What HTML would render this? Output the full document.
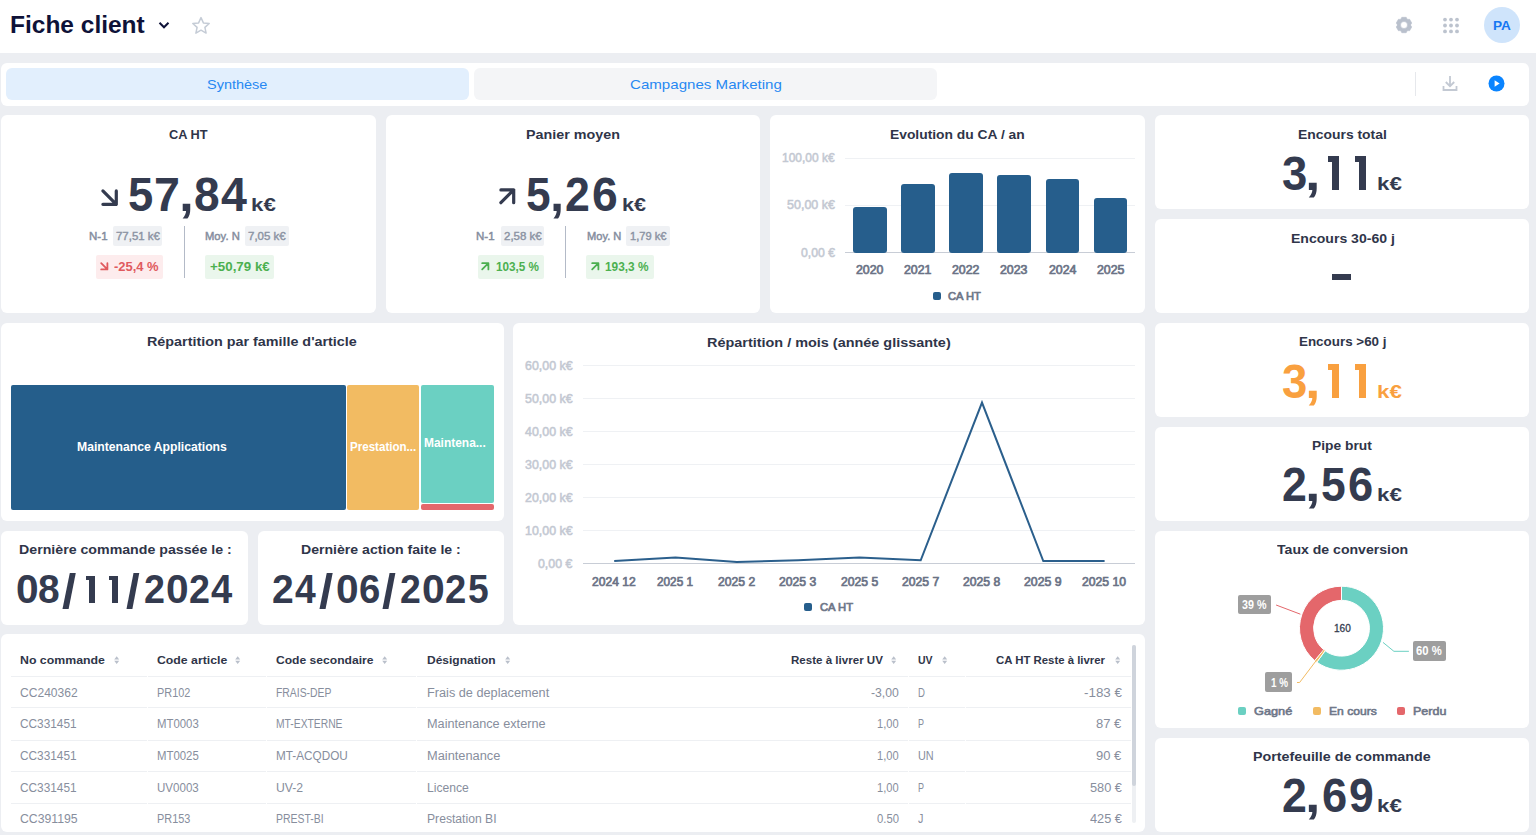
<!DOCTYPE html>
<html><head><meta charset="utf-8">
<style>
*{box-sizing:border-box;margin:0;padding:0}
html,body{width:1536px;height:835px;overflow:hidden}
body{background:#eceef2;font-family:"Liberation Sans",sans-serif;color:#343b4f;position:relative}
.t{position:absolute;white-space:nowrap;transform-origin:0 0}
.card{position:absolute;background:#fff;border-radius:6px}
svg{position:absolute;overflow:visible}
</style></head><body>
<div class="t" style="left:0px;top:0px;width:1536px;height:53px;background:#fff;border-radius:0px;"></div>
<div class="t" style="left:10.45px;top:11.80px;font-size:23.4px;line-height:26px;color:#0e1238;font-weight:bold;transform:scaleX(1.0470);">Fiche client</div>
<svg style="left:158px;top:21px" width="12" height="9" viewBox="0 0 12 9"><path d="M1.5 1.8 L6 6.3 L10.5 1.8" fill="none" stroke="#0e1238" stroke-width="2"/></svg>
<svg style="left:191px;top:16px" width="20" height="19" viewBox="0 0 20 19"><path d="M10 1.6 L12.4 6.9 L18.2 7.5 L13.9 11.4 L15.1 17.1 L10 14.2 L4.9 17.1 L6.1 11.4 L1.8 7.5 L7.6 6.9 Z" fill="none" stroke="#c5ccd6" stroke-width="1.5" stroke-linejoin="round"/></svg>
<svg style="left:1393.6px;top:14.75px" width="20" height="20" viewBox="0 0 20 20"><path fill="#b9c0cc" fill-rule="evenodd" stroke="#b9c0cc" stroke-width="0.6" stroke-linejoin="round" d="M7.13 3.84 L7.79 2.31 L12.21 2.31 L12.87 3.84 L13.90 4.43 L15.56 4.25 L17.76 8.06 L16.77 9.41 L16.77 10.59 L17.76 11.94 L15.56 15.75 L13.90 15.57 L12.87 16.16 L12.21 17.69 L7.79 17.69 L7.13 16.16 L6.10 15.57 L4.44 15.75 L2.24 11.94 L3.23 10.59 L3.23 9.41 L2.24 8.06 L4.44 4.25 L6.10 4.43 Z M13.5 10 A3.5 3.5 0 1 0 6.5 10 A3.5 3.5 0 1 0 13.5 10 Z"/></svg>
<svg style="left:1442px;top:17px" width="18" height="17" viewBox="0 0 18 17"><g fill="#bcc3ce"><circle cx="3" cy="2.6" r="1.9"/><circle cx="9" cy="2.6" r="1.9"/><circle cx="15" cy="2.6" r="1.9"/><circle cx="3" cy="8.5" r="1.9"/><circle cx="9" cy="8.5" r="1.9"/><circle cx="15" cy="8.5" r="1.9"/><circle cx="3" cy="14.4" r="1.9"/><circle cx="9" cy="14.4" r="1.9"/><circle cx="15" cy="14.4" r="1.9"/></g></svg>
<div class="t" style="left:1484px;top:7px;width:36px;height:36px;background:#cfe4fb;border-radius:18px;"></div>
<div class="t" style="left:1493.00px;top:18.00px;font-size:13.5px;line-height:15px;color:#1677f2;font-weight:bold;transform:scaleX(1.0110);">PA</div>
<div class="card" style="left:1px;top:63.4px;width:1528px;height:42.2px"></div>
<div class="t" style="left:6px;top:68px;width:463px;height:32px;background:#e2effd;border-radius:6px;"></div>
<div class="t" style="left:474px;top:68px;width:463px;height:32px;background:#f4f5f7;border-radius:6px;"></div>
<div class="t" style="left:207.30px;top:76.90px;font-size:13.5px;line-height:15px;color:#2788f2;font-weight:normal;transform:scaleX(1.0721);">Synthèse</div>
<div class="t" style="left:629.70px;top:76.80px;font-size:13.5px;line-height:15px;color:#2788f2;font-weight:normal;transform:scaleX(1.1182);">Campagnes Marketing</div>
<div class="t" style="left:1415px;top:72px;width:1px;height:24px;background:#e6e8ec;border-radius:0px;"></div>
<svg style="left:1441px;top:74px" width="18" height="18" viewBox="0 0 18 18"><path d="M9 2 V12 M4.8 8 L9 12.2 L13.2 8 M2.5 12 V16 H15.5 V12" fill="none" stroke="#c3c9d3" stroke-width="1.8"/></svg>
<svg style="left:1488px;top:75px" width="17" height="17" viewBox="0 0 17 17"><circle cx="8.5" cy="8.5" r="8" fill="#0a84ff"/><path d="M6.6 5.3 L11.6 8.5 L6.6 11.7 Z" fill="#fff"/></svg>
<div class="card" style="left:1px;top:115px;width:375px;height:198px"></div>
<div class="card" style="left:386px;top:115px;width:374px;height:198px"></div>
<div class="card" style="left:770px;top:115px;width:375px;height:198px"></div>
<div class="card" style="left:1155px;top:115px;width:374px;height:94px"></div>
<div class="card" style="left:1155px;top:219px;width:374px;height:94px"></div>
<div class="card" style="left:1px;top:323px;width:503px;height:198px"></div>
<div class="card" style="left:513px;top:323px;width:632px;height:302px"></div>
<div class="card" style="left:1155px;top:323px;width:374px;height:94px"></div>
<div class="card" style="left:1155px;top:427px;width:374px;height:94px"></div>
<div class="card" style="left:1px;top:531px;width:247px;height:94px"></div>
<div class="card" style="left:258px;top:531px;width:246px;height:94px"></div>
<div class="card" style="left:1155px;top:531px;width:374px;height:197px"></div>
<div class="card" style="left:1px;top:634px;width:1144px;height:198px"></div>
<div class="card" style="left:1155px;top:738px;width:374px;height:94px"></div>
<div class="t" style="left:169.00px;top:126.60px;font-size:13.7px;line-height:15px;color:#2f3549;font-weight:bold;transform:scaleX(0.9327);">CA HT</div>
<svg style="left:101px;top:188.6px" width="17.2" height="17.2" viewBox="0 0 17.2 17.2"><path d="M1.9000000000000001 1.9000000000000001 L15.299999999999999 15.299999999999999 M15.299999999999999 1.9000000000000001 V15.299999999999999 H1.9000000000000001" fill="none" stroke="#343b4f" stroke-width="3.2" stroke-linecap="round" stroke-linejoin="round"/></svg>
<div class="t" style="left:127.95px;top:167.80px;font-size:47.9px;line-height:53px;color:#343b4f;font-weight:bold;transform:scaleX(0.9480);">5</div>
<div class="t" style="left:154.45px;top:167.80px;font-size:47.9px;line-height:53px;color:#343b4f;font-weight:bold;transform:scaleX(0.9739);">7</div>
<div class="t" style="left:178.86px;top:167.80px;font-size:47.9px;line-height:53px;color:#343b4f;font-weight:bold;transform:scaleX(1.1125);">,</div>
<div class="t" style="left:193.54px;top:167.80px;font-size:47.9px;line-height:53px;color:#343b4f;font-weight:bold;transform:scaleX(0.9640);">8</div>
<div class="t" style="left:220.70px;top:167.80px;font-size:47.9px;line-height:53px;color:#343b4f;font-weight:bold;transform:scaleX(0.9741);">4</div>
<div class="t" style="left:250.80px;top:193.80px;font-size:18.5px;line-height:21px;color:#343b4f;font-weight:bold;transform:scaleX(1.2028);">k€</div>
<div class="t" style="left:88.60px;top:229.50px;font-size:11px;line-height:12px;color:#858d9e;font-weight:normal;-webkit-text-stroke:0.45px #858d9e;transform:scaleX(1.0450);">N-1</div>
<div class="t" style="left:113.2px;top:226px;width:49.2px;height:19.5px;background:#eff1f4;border-radius:2px;"></div>
<div class="t" style="left:116.30px;top:229.50px;font-size:11px;line-height:12px;color:#8b93a3;font-weight:normal;-webkit-text-stroke:0.4px #8b93a3;transform:scaleX(1.0384);">77,51 k€</div>
<div class="t" style="left:184px;top:226px;width:1.3px;height:51.5px;background:#b3bac7;border-radius:0px;"></div>
<div class="t" style="left:205.00px;top:229.50px;font-size:11px;line-height:12px;color:#858d9e;font-weight:normal;-webkit-text-stroke:0.45px #858d9e;transform:scaleX(1.0212);">Moy. N</div>
<div class="t" style="left:244.5px;top:226px;width:44.1px;height:19.5px;background:#eff1f4;border-radius:2px;"></div>
<div class="t" style="left:248.40px;top:229.50px;font-size:11px;line-height:12px;color:#8b93a3;font-weight:normal;-webkit-text-stroke:0.4px #8b93a3;transform:scaleX(1.0427);">7,05 k€</div>
<div class="t" style="left:95.6px;top:255.2px;width:67.2px;height:23.4px;background:#fdeced;border-radius:2px;"></div>
<svg style="left:99.9px;top:262.4px" width="8.6" height="8.6" viewBox="0 0 8.6 8.6"><path d="M1.2 1.2 L7.3999999999999995 7.3999999999999995 M7.3999999999999995 1.2 V7.3999999999999995 H1.2" fill="none" stroke="#e05a5e" stroke-width="1.8" stroke-linecap="round" stroke-linejoin="round"/></svg>
<div class="t" style="left:113.60px;top:259.80px;font-size:12.5px;line-height:14px;color:#e05a5e;font-weight:bold;transform:scaleX(1.0357);">-25,4 %</div>
<div class="t" style="left:205px;top:255.2px;width:69.1px;height:23.4px;background:#eaf6ec;border-radius:2px;"></div>
<div class="t" style="left:210.00px;top:259.80px;font-size:12.5px;line-height:14px;color:#4cb050;font-weight:bold;transform:scaleX(1.0678);">+50,79 k€</div>
<div class="t" style="left:526.10px;top:126.60px;font-size:13.7px;line-height:15px;color:#2f3549;font-weight:bold;transform:scaleX(1.0458);">Panier moyen</div>
<svg style="left:499.2px;top:188.3px" width="16.6" height="16.6" viewBox="0 0 16.6 16.6"><path d="M1.9000000000000001 14.700000000000001 L14.700000000000001 1.9000000000000001 M1.9000000000000001 1.9000000000000001 H14.700000000000001 V14.700000000000001" fill="none" stroke="#343b4f" stroke-width="3.2" stroke-linecap="round" stroke-linejoin="round"/></svg>
<div class="t" style="left:525.87px;top:168.00px;font-size:47.7px;line-height:53px;color:#343b4f;font-weight:bold;transform:scaleX(0.9280);">5</div>
<div class="t" style="left:549.81px;top:168.00px;font-size:47.7px;line-height:53px;color:#343b4f;font-weight:bold;transform:scaleX(1.0625);">,</div>
<div class="t" style="left:565.16px;top:168.00px;font-size:47.7px;line-height:53px;color:#343b4f;font-weight:bold;transform:scaleX(0.9375);">2</div>
<div class="t" style="left:591.83px;top:168.00px;font-size:47.7px;line-height:53px;color:#343b4f;font-weight:bold;transform:scaleX(0.9708);">6</div>
<div class="t" style="left:621.63px;top:194.00px;font-size:18.5px;line-height:21px;color:#343b4f;font-weight:bold;transform:scaleX(1.1665);">k€</div>
<div class="t" style="left:476.30px;top:229.50px;font-size:11px;line-height:12px;color:#858d9e;font-weight:normal;-webkit-text-stroke:0.45px #858d9e;transform:scaleX(1.0450);">N-1</div>
<div class="t" style="left:500.9px;top:226px;width:43px;height:19.5px;background:#eff1f4;border-radius:2px;"></div>
<div class="t" style="left:503.70px;top:229.50px;font-size:11px;line-height:12px;color:#8b93a3;font-weight:normal;-webkit-text-stroke:0.4px #8b93a3;transform:scaleX(1.0427);">2,58 k€</div>
<div class="t" style="left:565px;top:226px;width:1.3px;height:51.5px;background:#b3bac7;border-radius:0px;"></div>
<div class="t" style="left:586.60px;top:229.50px;font-size:11px;line-height:12px;color:#858d9e;font-weight:normal;-webkit-text-stroke:0.45px #858d9e;transform:scaleX(1.0095);">Moy. N</div>
<div class="t" style="left:626.4px;top:226px;width:43.4px;height:19.5px;background:#eff1f4;border-radius:2px;"></div>
<div class="t" style="left:630.30px;top:229.50px;font-size:11px;line-height:12px;color:#8b93a3;font-weight:normal;-webkit-text-stroke:0.4px #8b93a3;transform:scaleX(1.0093);">1,79 k€</div>
<div class="t" style="left:477.5px;top:255.2px;width:66.4px;height:23.4px;background:#eaf6ec;border-radius:2px;"></div>
<svg style="left:481px;top:262px" width="8.6" height="8.6" viewBox="0 0 8.6 8.6"><path d="M1.2 7.3999999999999995 L7.3999999999999995 1.2 M1.2 1.2 H7.3999999999999995 V7.3999999999999995" fill="none" stroke="#4cb050" stroke-width="1.8" stroke-linecap="round" stroke-linejoin="round"/></svg>
<div class="t" style="left:496.30px;top:259.80px;font-size:12.5px;line-height:14px;color:#4cb050;font-weight:bold;transform:scaleX(0.9376);">103,5 %</div>
<div class="t" style="left:586.2px;top:255.2px;width:67.5px;height:23.4px;background:#eaf6ec;border-radius:2px;"></div>
<svg style="left:590.5px;top:262px" width="8.6" height="8.6" viewBox="0 0 8.6 8.6"><path d="M1.2 7.3999999999999995 L7.3999999999999995 1.2 M1.2 1.2 H7.3999999999999995 V7.3999999999999995" fill="none" stroke="#4cb050" stroke-width="1.8" stroke-linecap="round" stroke-linejoin="round"/></svg>
<div class="t" style="left:605.30px;top:259.80px;font-size:12.5px;line-height:14px;color:#4cb050;font-weight:bold;transform:scaleX(0.9486);">193,3 %</div>
<div class="t" style="left:889.90px;top:126.70px;font-size:13.7px;line-height:15px;color:#2f3549;font-weight:bold;transform:scaleX(1.0107);">Evolution du CA / an</div>
<div class="t" style="left:782.20px;top:151.40px;font-size:12px;line-height:14px;color:#c3c8d2;font-weight:normal;-webkit-text-stroke:0.5px #c3c8d2;transform:scaleX(0.9974);">100,00 k€</div>
<div class="t" style="left:786.80px;top:198.40px;font-size:12px;line-height:14px;color:#c3c8d2;font-weight:normal;-webkit-text-stroke:0.5px #c3c8d2;transform:scaleX(1.0418);">50,00 k€</div>
<div class="t" style="left:800.80px;top:246.40px;font-size:12px;line-height:14px;color:#c3c8d2;font-weight:normal;-webkit-text-stroke:0.5px #c3c8d2;transform:scaleX(1.0181);">0,00 €</div>
<div class="t" style="left:845px;top:157.5px;width:290px;height:1px;background:#eff1f4;border-radius:0px;"></div>
<div class="t" style="left:845px;top:205px;width:290px;height:1px;background:#eff1f4;border-radius:0px;"></div>
<div class="t" style="left:845px;top:252px;width:290px;height:1.2px;background:#c8cdd6;border-radius:0px;"></div>
<div class="t" style="left:853px;top:206.8px;width:33.7px;height:46.0px;background:#265e8c;border-radius:3px;"></div>
<div class="t" style="left:856.25px;top:263.40px;font-size:12px;line-height:14px;color:#6b7386;font-weight:normal;-webkit-text-stroke:0.7px #6b7386;transform:scaleX(1.0288);">2020</div>
<div class="t" style="left:901px;top:184px;width:33.7px;height:68.80000000000001px;background:#265e8c;border-radius:3px;"></div>
<div class="t" style="left:904.25px;top:263.40px;font-size:12px;line-height:14px;color:#6b7386;font-weight:normal;-webkit-text-stroke:0.7px #6b7386;transform:scaleX(1.0288);">2021</div>
<div class="t" style="left:949px;top:172.7px;width:33.7px;height:80.10000000000002px;background:#265e8c;border-radius:3px;"></div>
<div class="t" style="left:952.25px;top:263.40px;font-size:12px;line-height:14px;color:#6b7386;font-weight:normal;-webkit-text-stroke:0.7px #6b7386;transform:scaleX(1.0288);">2022</div>
<div class="t" style="left:997.2px;top:175.3px;width:33.7px;height:77.5px;background:#265e8c;border-radius:3px;"></div>
<div class="t" style="left:1000.45px;top:263.40px;font-size:12px;line-height:14px;color:#6b7386;font-weight:normal;-webkit-text-stroke:0.7px #6b7386;transform:scaleX(1.0288);">2023</div>
<div class="t" style="left:1045.5px;top:179.1px;width:33.7px;height:73.70000000000002px;background:#265e8c;border-radius:3px;"></div>
<div class="t" style="left:1048.75px;top:263.40px;font-size:12px;line-height:14px;color:#6b7386;font-weight:normal;-webkit-text-stroke:0.7px #6b7386;transform:scaleX(1.0288);">2024</div>
<div class="t" style="left:1093.7px;top:198.1px;width:33.7px;height:54.70000000000002px;background:#265e8c;border-radius:3px;"></div>
<div class="t" style="left:1096.95px;top:263.40px;font-size:12px;line-height:14px;color:#6b7386;font-weight:normal;-webkit-text-stroke:0.7px #6b7386;transform:scaleX(1.0288);">2025</div>
<div class="t" style="left:932.8px;top:291.7px;width:8px;height:8px;background:#265e8c;border-radius:2px;"></div>
<div class="t" style="left:948.40px;top:289.80px;font-size:11.3px;line-height:12px;color:#6e7688;font-weight:normal;-webkit-text-stroke:0.7px #6e7688;transform:scaleX(0.9885);">CA HT</div>
<div class="t" style="left:1297.80px;top:126.60px;font-size:13.7px;line-height:15px;color:#2f3549;font-weight:bold;transform:scaleX(1.0155);">Encours total</div>
<div class="t" style="left:1282.35px;top:146.80px;font-size:47.7px;line-height:53px;color:#343b4f;font-weight:bold;transform:scaleX(0.9542);">3</div>
<div class="t" style="left:1305.31px;top:146.80px;font-size:47.7px;line-height:53px;color:#343b4f;font-weight:bold;transform:scaleX(1.1625);">,</div>
<div class="t" style="left:1332.1px;top:156.4px;width:6.900000000000091px;height:33.400000000000006px;background:#343b4f;border-radius:0px;"></div>
<div class="t" style="left:1327.7px;top:156.4px;width:4.899999999999864px;height:5.699999999999989px;background:#343b4f;border-radius:0px;"></div>
<div class="t" style="left:1358.9px;top:156.4px;width:7.099999999999909px;height:33.400000000000006px;background:#343b4f;border-radius:0px;"></div>
<div class="t" style="left:1355px;top:156.4px;width:4.400000000000091px;height:5.699999999999989px;background:#343b4f;border-radius:0px;"></div>
<div class="t" style="left:1377.49px;top:172.80px;font-size:18.5px;line-height:21px;color:#343b4f;font-weight:bold;transform:scaleX(1.2080);">k€</div>
<div class="t" style="left:1290.50px;top:230.60px;font-size:13.7px;line-height:15px;color:#2f3549;font-weight:bold;transform:scaleX(1.0261);">Encours 30-60 j</div>
<div class="t" style="left:1332px;top:274.3px;width:19px;height:5.6px;background:#343b4f;border-radius:0px;"></div>
<div class="t" style="left:1298.90px;top:334.40px;font-size:13.7px;line-height:15px;color:#2f3549;font-weight:bold;transform:scaleX(0.9787);">Encours >60 j</div>
<div class="t" style="left:1282.35px;top:354.80px;font-size:47.7px;line-height:53px;color:#f9a03f;font-weight:bold;transform:scaleX(0.9542);">3</div>
<div class="t" style="left:1305.31px;top:354.80px;font-size:47.7px;line-height:53px;color:#f9a03f;font-weight:bold;transform:scaleX(1.1625);">,</div>
<div class="t" style="left:1332.1px;top:364.4px;width:6.900000000000091px;height:33.400000000000034px;background:#f9a03f;border-radius:0px;"></div>
<div class="t" style="left:1327.7px;top:364.4px;width:4.899999999999864px;height:5.7000000000000455px;background:#f9a03f;border-radius:0px;"></div>
<div class="t" style="left:1358.9px;top:364.4px;width:7.099999999999909px;height:33.400000000000034px;background:#f9a03f;border-radius:0px;"></div>
<div class="t" style="left:1355px;top:364.4px;width:4.400000000000091px;height:5.7000000000000455px;background:#f9a03f;border-radius:0px;"></div>
<div class="t" style="left:1377.49px;top:380.80px;font-size:18.5px;line-height:21px;color:#f9a03f;font-weight:bold;transform:scaleX(1.2080);">k€</div>
<div class="t" style="left:1311.70px;top:438.20px;font-size:13.7px;line-height:15px;color:#2f3549;font-weight:bold;transform:scaleX(1.0091);">Pipe brut</div>
<div class="t" style="left:1282.36px;top:457.90px;font-size:47.7px;line-height:53px;color:#343b4f;font-weight:bold;transform:scaleX(0.9375);">2</div>
<div class="t" style="left:1305.31px;top:457.90px;font-size:47.7px;line-height:53px;color:#343b4f;font-weight:bold;transform:scaleX(1.1625);">,</div>
<div class="t" style="left:1321.07px;top:457.90px;font-size:47.7px;line-height:53px;color:#343b4f;font-weight:bold;transform:scaleX(0.9320);">5</div>
<div class="t" style="left:1348.35px;top:457.90px;font-size:47.7px;line-height:53px;color:#343b4f;font-weight:bold;transform:scaleX(0.9500);">6</div>
<div class="t" style="left:1377.49px;top:483.90px;font-size:18.5px;line-height:21px;color:#343b4f;font-weight:bold;transform:scaleX(1.2080);">k€</div>
<div class="t" style="left:1252.90px;top:749.20px;font-size:13.7px;line-height:15px;color:#2f3549;font-weight:bold;transform:scaleX(1.0429);">Portefeuille de commande</div>
<div class="t" style="left:1282.36px;top:768.70px;font-size:47.7px;line-height:53px;color:#343b4f;font-weight:bold;transform:scaleX(0.9375);">2</div>
<div class="t" style="left:1305.31px;top:768.70px;font-size:47.7px;line-height:53px;color:#343b4f;font-weight:bold;transform:scaleX(1.1625);">,</div>
<div class="t" style="left:1321.55px;top:768.70px;font-size:47.7px;line-height:53px;color:#343b4f;font-weight:bold;transform:scaleX(0.9500);">6</div>
<div class="t" style="left:1348.77px;top:768.70px;font-size:47.7px;line-height:53px;color:#343b4f;font-weight:bold;transform:scaleX(0.9333);">9</div>
<div class="t" style="left:1377.49px;top:794.70px;font-size:18.5px;line-height:21px;color:#343b4f;font-weight:bold;transform:scaleX(1.2080);">k€</div>
<div class="t" style="left:147.20px;top:334.00px;font-size:13.7px;line-height:15px;color:#2f3549;font-weight:bold;transform:scaleX(1.0476);">Répartition par famille d'article</div>
<div class="t" style="left:11px;top:384.7px;width:334.6px;height:125.8px;background:#255e8b;border-radius:2px;"></div>
<div class="t" style="left:347.3px;top:384.7px;width:71.9px;height:125.8px;background:#f2bb62;border-radius:2px;"></div>
<div class="t" style="left:421px;top:384.7px;width:72.7px;height:117.9px;background:#6bd0c2;border-radius:2px;"></div>
<div class="t" style="left:421px;top:504.3px;width:72.7px;height:6.2px;background:#e4676b;border-radius:2px;"></div>
<div class="t" style="left:76.60px;top:440.00px;font-size:12px;line-height:14px;color:#ffffff;font-weight:bold;transform:scaleX(1.0152);">Maintenance Applications</div>
<div class="t" style="left:349.90px;top:439.80px;font-size:12px;line-height:14px;color:#ffffff;font-weight:bold;transform:scaleX(0.9642);">Prestation...</div>
<div class="t" style="left:423.90px;top:436.00px;font-size:12px;line-height:14px;color:#ffffff;font-weight:bold;transform:scaleX(0.9955);">Maintena...</div>
<div class="t" style="left:18.70px;top:541.70px;font-size:13.7px;line-height:15px;color:#2f3549;font-weight:bold;transform:scaleX(1.0359);">Dernière commande passée le :</div>
<div class="t" style="left:15.68px;top:566.90px;font-size:40.1px;line-height:45px;color:#343b4f;font-weight:bold;transform:scaleX(1.0150);">0</div>
<div class="t" style="left:38.33px;top:566.90px;font-size:40.1px;line-height:45px;color:#343b4f;font-weight:bold;transform:scaleX(0.9714);">8</div>
<div class="t" style="left:62.40px;top:563.64px;font-size:40.1px;line-height:45px;color:#343b4f;font-weight:bold;transform:scale(1.2818,1.2097);">/</div>
<div class="t" style="left:89px;top:575.5px;width:6.200000000000003px;height:27.399999999999977px;background:#343b4f;border-radius:0px;"></div>
<div class="t" style="left:85.8px;top:575.5px;width:3.700000000000003px;height:4.2999999999999545px;background:#343b4f;border-radius:0px;"></div>
<div class="t" style="left:111.6px;top:575.5px;width:6.300000000000011px;height:27.399999999999977px;background:#343b4f;border-radius:0px;"></div>
<div class="t" style="left:108.5px;top:575.5px;width:3.5999999999999943px;height:4.2999999999999545px;background:#343b4f;border-radius:0px;"></div>
<div class="t" style="left:126.30px;top:563.64px;font-size:40.1px;line-height:45px;color:#343b4f;font-weight:bold;transform:scale(1.2364,1.2097);">/</div>
<div class="t" style="left:143.66px;top:566.90px;font-size:40.1px;line-height:45px;color:#343b4f;font-weight:bold;transform:scaleX(0.9400);">2</div>
<div class="t" style="left:165.89px;top:566.90px;font-size:40.1px;line-height:45px;color:#343b4f;font-weight:bold;transform:scaleX(1.0150);">0</div>
<div class="t" style="left:188.96px;top:566.90px;font-size:40.1px;line-height:45px;color:#343b4f;font-weight:bold;transform:scaleX(0.9400);">2</div>
<div class="t" style="left:211.00px;top:566.90px;font-size:40.1px;line-height:45px;color:#343b4f;font-weight:bold;transform:scaleX(0.9522);">4</div>
<div class="t" style="left:301.20px;top:541.70px;font-size:13.7px;line-height:15px;color:#2f3549;font-weight:bold;transform:scaleX(1.0296);">Dernière action faite le :</div>
<div class="t" style="left:272.12px;top:566.90px;font-size:40.1px;line-height:45px;color:#343b4f;font-weight:bold;transform:scaleX(0.9750);">2</div>
<div class="t" style="left:295.00px;top:566.90px;font-size:40.1px;line-height:45px;color:#343b4f;font-weight:bold;transform:scaleX(0.9304);">4</div>
<div class="t" style="left:318.80px;top:563.64px;font-size:40.1px;line-height:45px;color:#343b4f;font-weight:bold;transform:scale(1.2727,1.2097);">/</div>
<div class="t" style="left:335.79px;top:566.90px;font-size:40.1px;line-height:45px;color:#343b4f;font-weight:bold;transform:scaleX(1.0150);">0</div>
<div class="t" style="left:359.25px;top:566.90px;font-size:40.1px;line-height:45px;color:#343b4f;font-weight:bold;transform:scaleX(0.9550);">6</div>
<div class="t" style="left:382.40px;top:563.64px;font-size:40.1px;line-height:45px;color:#343b4f;font-weight:bold;transform:scale(1.2455,1.2097);">/</div>
<div class="t" style="left:400.26px;top:566.90px;font-size:40.1px;line-height:45px;color:#343b4f;font-weight:bold;transform:scaleX(0.9350);">2</div>
<div class="t" style="left:421.98px;top:566.90px;font-size:40.1px;line-height:45px;color:#343b4f;font-weight:bold;transform:scaleX(1.0200);">0</div>
<div class="t" style="left:445.15px;top:566.90px;font-size:40.1px;line-height:45px;color:#343b4f;font-weight:bold;transform:scaleX(0.9550);">2</div>
<div class="t" style="left:467.87px;top:566.90px;font-size:40.1px;line-height:45px;color:#343b4f;font-weight:bold;transform:scaleX(0.9286);">5</div>
<div class="t" style="left:707.10px;top:334.60px;font-size:13.7px;line-height:15px;color:#2f3549;font-weight:bold;transform:scaleX(1.0540);">Répartition / mois (année glissante)</div>
<div class="t" style="left:524.60px;top:359.00px;font-size:12px;line-height:14px;color:#c3c8d2;font-weight:normal;-webkit-text-stroke:0.5px #c3c8d2;transform:scaleX(1.0331);">60,00 k€</div>
<div class="t" style="left:583px;top:364.9px;width:552px;height:1px;background:#eff1f4;border-radius:0px;"></div>
<div class="t" style="left:524.60px;top:392.00px;font-size:12px;line-height:14px;color:#c3c8d2;font-weight:normal;-webkit-text-stroke:0.5px #c3c8d2;transform:scaleX(1.0331);">50,00 k€</div>
<div class="t" style="left:583px;top:397.9px;width:552px;height:1px;background:#eff1f4;border-radius:0px;"></div>
<div class="t" style="left:524.60px;top:425.00px;font-size:12px;line-height:14px;color:#c3c8d2;font-weight:normal;-webkit-text-stroke:0.5px #c3c8d2;transform:scaleX(1.0331);">40,00 k€</div>
<div class="t" style="left:583px;top:430.9px;width:552px;height:1px;background:#eff1f4;border-radius:0px;"></div>
<div class="t" style="left:524.60px;top:458.00px;font-size:12px;line-height:14px;color:#c3c8d2;font-weight:normal;-webkit-text-stroke:0.5px #c3c8d2;transform:scaleX(1.0331);">30,00 k€</div>
<div class="t" style="left:583px;top:463.9px;width:552px;height:1px;background:#eff1f4;border-radius:0px;"></div>
<div class="t" style="left:524.60px;top:491.00px;font-size:12px;line-height:14px;color:#c3c8d2;font-weight:normal;-webkit-text-stroke:0.5px #c3c8d2;transform:scaleX(1.0331);">20,00 k€</div>
<div class="t" style="left:583px;top:496.9px;width:552px;height:1px;background:#eff1f4;border-radius:0px;"></div>
<div class="t" style="left:524.60px;top:524.00px;font-size:12px;line-height:14px;color:#c3c8d2;font-weight:normal;-webkit-text-stroke:0.5px #c3c8d2;transform:scaleX(1.0331);">10,00 k€</div>
<div class="t" style="left:583px;top:529.9px;width:552px;height:1px;background:#eff1f4;border-radius:0px;"></div>
<div class="t" style="left:537.80px;top:557.00px;font-size:12px;line-height:14px;color:#c3c8d2;font-weight:normal;-webkit-text-stroke:0.5px #c3c8d2;transform:scaleX(1.0300);">0,00 €</div>
<div class="t" style="left:583px;top:562.9px;width:552px;height:1.2px;background:#c8cdd6;border-radius:0px;"></div>
<div class="t" style="left:592.20px;top:574.80px;font-size:12px;line-height:14px;color:#6b7386;font-weight:normal;-webkit-text-stroke:0.7px #6b7386;transform:scaleX(1.0068);">2024 12</div>
<div class="t" style="left:657.35px;top:574.80px;font-size:12px;line-height:14px;color:#6b7386;font-weight:normal;-webkit-text-stroke:0.7px #6b7386;transform:scaleX(0.9803);">2025 1</div>
<div class="t" style="left:718.05px;top:574.80px;font-size:12px;line-height:14px;color:#6b7386;font-weight:normal;-webkit-text-stroke:0.7px #6b7386;transform:scaleX(1.0127);">2025 2</div>
<div class="t" style="left:779.35px;top:574.80px;font-size:12px;line-height:14px;color:#6b7386;font-weight:normal;-webkit-text-stroke:0.7px #6b7386;transform:scaleX(1.0127);">2025 3</div>
<div class="t" style="left:840.65px;top:574.80px;font-size:12px;line-height:14px;color:#6b7386;font-weight:normal;-webkit-text-stroke:0.7px #6b7386;transform:scaleX(1.0127);">2025 5</div>
<div class="t" style="left:901.95px;top:574.80px;font-size:12px;line-height:14px;color:#6b7386;font-weight:normal;-webkit-text-stroke:0.7px #6b7386;transform:scaleX(1.0127);">2025 7</div>
<div class="t" style="left:963.25px;top:574.80px;font-size:12px;line-height:14px;color:#6b7386;font-weight:normal;-webkit-text-stroke:0.7px #6b7386;transform:scaleX(1.0127);">2025 8</div>
<div class="t" style="left:1024.35px;top:574.80px;font-size:12px;line-height:14px;color:#6b7386;font-weight:normal;-webkit-text-stroke:0.7px #6b7386;transform:scaleX(1.0235);">2025 9</div>
<div class="t" style="left:1082.40px;top:574.80px;font-size:12px;line-height:14px;color:#6b7386;font-weight:normal;-webkit-text-stroke:0.7px #6b7386;transform:scaleX(1.0159);">2025 10</div>
<svg style="left:0;top:0" width="1536" height="835"><polyline points="614.2,561.1 675.5,557.4 736.8,561.9 798.1,560.3 859.4,557.5 920.7,560.3 982.0,402.6 1043.3,561.0 1104.6,561.0" fill="none" stroke="#2b5f8c" stroke-width="2" stroke-linejoin="miter"/></svg>
<div class="t" style="left:803.5px;top:603px;width:8px;height:8px;background:#265e8c;border-radius:2px;"></div>
<div class="t" style="left:820.30px;top:601.00px;font-size:11.3px;line-height:12px;color:#6e7688;font-weight:normal;-webkit-text-stroke:0.7px #6e7688;transform:scaleX(0.9944);">CA HT</div>
<div class="t" style="left:1276.50px;top:541.90px;font-size:13.7px;line-height:15px;color:#2f3549;font-weight:bold;transform:scaleX(1.0285);">Taux de conversion</div>
<svg style="left:0;top:0" width="1536" height="835"><path d="M1341.50 586.20 A42 42 0 1 1 1316.81 662.18 L1325.10 650.77 A27.9 27.9 0 1 0 1341.50 600.30 Z" fill="#6bd0c2" stroke="#fff" stroke-width="1"/><path d="M1316.81 662.18 A42 42 0 0 1 1314.73 660.56 L1323.72 649.70 A27.9 27.9 0 0 0 1325.10 650.77 Z" fill="#f2bb62" stroke="#fff" stroke-width="1"/><path d="M1314.73 660.56 A42 42 0 0 1 1341.50 586.20 L1341.50 600.30 A27.9 27.9 0 0 0 1323.72 649.70 Z" fill="#e4676b" stroke="#fff" stroke-width="1"/><polyline points="1276.1,605 1300.4,614.2" fill="none" stroke="#e4676b" stroke-width="1"/><polyline points="1383,642.4 1393.9,651.3 1408.9,651.3" fill="none" stroke="#6bd0c2" stroke-width="1"/><polyline points="1297,682.5 1299.6,682.5 1324.3,649.9" fill="none" stroke="#f2bb62" stroke-width="1"/></svg>
<div class="t" style="left:1334.00px;top:621.90px;font-size:10.5px;line-height:12px;color:#343b4f;font-weight:normal;-webkit-text-stroke:0.3px #343b4f;transform:scaleX(0.9616);">160</div>
<div class="t" style="left:1238.2px;top:594.8px;width:32.7px;height:19.4px;background:#9e9e9e;border-radius:2px;"></div>
<div class="t" style="left:1242.00px;top:597.70px;font-size:12px;line-height:14px;color:#fff;font-weight:bold;transform:scaleX(0.8923);">39 %</div>
<div class="t" style="left:1412.5px;top:641px;width:33.1px;height:19.7px;background:#9e9e9e;border-radius:2px;"></div>
<div class="t" style="left:1416.20px;top:644.20px;font-size:12px;line-height:14px;color:#fff;font-weight:bold;transform:scaleX(0.9393);">60 %</div>
<div class="t" style="left:1265.2px;top:672.2px;width:26.4px;height:19.6px;background:#9e9e9e;border-radius:2px;"></div>
<div class="t" style="left:1270.50px;top:675.50px;font-size:12px;line-height:14px;color:#fff;font-weight:bold;transform:scaleX(0.8235);">1 %</div>
<div class="t" style="left:1238.2px;top:707.3px;width:8px;height:7.5px;background:#6bd0c2;border-radius:2px;"></div>
<div class="t" style="left:1254.30px;top:704.90px;font-size:11.5px;line-height:12px;color:#6e7688;font-weight:normal;-webkit-text-stroke:0.6px #6e7688;transform:scaleX(1.1075);">Gagné</div>
<div class="t" style="left:1312.8px;top:707.3px;width:8px;height:7.5px;background:#f2bb62;border-radius:2px;"></div>
<div class="t" style="left:1328.50px;top:704.90px;font-size:11.5px;line-height:12px;color:#6e7688;font-weight:normal;-webkit-text-stroke:0.6px #6e7688;transform:scaleX(1.0519);">En cours</div>
<div class="t" style="left:1397px;top:707.3px;width:8px;height:7.5px;background:#e4676b;border-radius:2px;"></div>
<div class="t" style="left:1412.70px;top:704.90px;font-size:11.5px;line-height:12px;color:#6e7688;font-weight:normal;-webkit-text-stroke:0.6px #6e7688;transform:scaleX(1.0861);">Perdu</div>
<div class="t" style="left:20.20px;top:654.20px;font-size:11px;line-height:12px;color:#2f3549;font-weight:bold;transform:scaleX(1.1206);">No commande</div>
<div class="t" style="left:156.90px;top:654.20px;font-size:11px;line-height:12px;color:#2f3549;font-weight:bold;transform:scaleX(1.1154);">Code article</div>
<div class="t" style="left:276.10px;top:654.20px;font-size:11px;line-height:12px;color:#2f3549;font-weight:bold;transform:scaleX(1.0992);">Code secondaire</div>
<div class="t" style="left:426.70px;top:654.20px;font-size:11px;line-height:12px;color:#2f3549;font-weight:bold;transform:scaleX(1.0897);">Désignation</div>
<div class="t" style="left:790.50px;top:654.20px;font-size:11px;line-height:12px;color:#2f3549;font-weight:bold;transform:scaleX(1.0511);">Reste à livrer UV</div>
<div class="t" style="left:918.30px;top:654.20px;font-size:11px;line-height:12px;color:#2f3549;font-weight:bold;transform:scaleX(0.9533);">UV</div>
<div class="t" style="left:995.60px;top:654.20px;font-size:11px;line-height:12px;color:#2f3549;font-weight:bold;transform:scaleX(1.0349);">CA HT Reste à livrer</div>
<svg style="left:114px;top:656.1px" width="5.4" height="8.2" viewBox="0 0 5.4 8.2"><path d="M0.2 3.5 L2.7 0.2 L5.2 3.5 Z M0.2 4.7 L2.7 8 L5.2 4.7 Z" fill="#bac0cb"/></svg>
<svg style="left:234.6px;top:656.1px" width="5.4" height="8.2" viewBox="0 0 5.4 8.2"><path d="M0.2 3.5 L2.7 0.2 L5.2 3.5 Z M0.2 4.7 L2.7 8 L5.2 4.7 Z" fill="#bac0cb"/></svg>
<svg style="left:382px;top:656.1px" width="5.4" height="8.2" viewBox="0 0 5.4 8.2"><path d="M0.2 3.5 L2.7 0.2 L5.2 3.5 Z M0.2 4.7 L2.7 8 L5.2 4.7 Z" fill="#bac0cb"/></svg>
<svg style="left:504.7px;top:656.1px" width="5.4" height="8.2" viewBox="0 0 5.4 8.2"><path d="M0.2 3.5 L2.7 0.2 L5.2 3.5 Z M0.2 4.7 L2.7 8 L5.2 4.7 Z" fill="#bac0cb"/></svg>
<svg style="left:891.1px;top:656.1px" width="5.4" height="8.2" viewBox="0 0 5.4 8.2"><path d="M0.2 3.5 L2.7 0.2 L5.2 3.5 Z M0.2 4.7 L2.7 8 L5.2 4.7 Z" fill="#bac0cb"/></svg>
<svg style="left:942.2px;top:656.1px" width="5.4" height="8.2" viewBox="0 0 5.4 8.2"><path d="M0.2 3.5 L2.7 0.2 L5.2 3.5 Z M0.2 4.7 L2.7 8 L5.2 4.7 Z" fill="#bac0cb"/></svg>
<svg style="left:1114.9px;top:656.1px" width="5.4" height="8.2" viewBox="0 0 5.4 8.2"><path d="M0.2 3.5 L2.7 0.2 L5.2 3.5 Z M0.2 4.7 L2.7 8 L5.2 4.7 Z" fill="#bac0cb"/></svg>
<div class="t" style="left:10.5px;top:676.4px;width:136.0px;height:1px;background:#eef0f3;border-radius:0px;"></div>
<div class="t" style="left:147.5px;top:676.4px;width:118.0px;height:1px;background:#eef0f3;border-radius:0px;"></div>
<div class="t" style="left:266.5px;top:676.4px;width:149.5px;height:1px;background:#eef0f3;border-radius:0px;"></div>
<div class="t" style="left:417px;top:676.4px;width:491px;height:1px;background:#eef0f3;border-radius:0px;"></div>
<div class="t" style="left:909px;top:676.4px;width:56px;height:1px;background:#eef0f3;border-radius:0px;"></div>
<div class="t" style="left:966px;top:676.4px;width:164.5px;height:1px;background:#eef0f3;border-radius:0px;"></div>
<div class="t" style="left:10.5px;top:707.4px;width:136.0px;height:1px;background:#eef0f3;border-radius:0px;"></div>
<div class="t" style="left:147.5px;top:707.4px;width:118.0px;height:1px;background:#eef0f3;border-radius:0px;"></div>
<div class="t" style="left:266.5px;top:707.4px;width:149.5px;height:1px;background:#eef0f3;border-radius:0px;"></div>
<div class="t" style="left:417px;top:707.4px;width:491px;height:1px;background:#eef0f3;border-radius:0px;"></div>
<div class="t" style="left:909px;top:707.4px;width:56px;height:1px;background:#eef0f3;border-radius:0px;"></div>
<div class="t" style="left:966px;top:707.4px;width:164.5px;height:1px;background:#eef0f3;border-radius:0px;"></div>
<div class="t" style="left:10.5px;top:739.7px;width:136.0px;height:1px;background:#eef0f3;border-radius:0px;"></div>
<div class="t" style="left:147.5px;top:739.7px;width:118.0px;height:1px;background:#eef0f3;border-radius:0px;"></div>
<div class="t" style="left:266.5px;top:739.7px;width:149.5px;height:1px;background:#eef0f3;border-radius:0px;"></div>
<div class="t" style="left:417px;top:739.7px;width:491px;height:1px;background:#eef0f3;border-radius:0px;"></div>
<div class="t" style="left:909px;top:739.7px;width:56px;height:1px;background:#eef0f3;border-radius:0px;"></div>
<div class="t" style="left:966px;top:739.7px;width:164.5px;height:1px;background:#eef0f3;border-radius:0px;"></div>
<div class="t" style="left:10.5px;top:771.1px;width:136.0px;height:1px;background:#eef0f3;border-radius:0px;"></div>
<div class="t" style="left:147.5px;top:771.1px;width:118.0px;height:1px;background:#eef0f3;border-radius:0px;"></div>
<div class="t" style="left:266.5px;top:771.1px;width:149.5px;height:1px;background:#eef0f3;border-radius:0px;"></div>
<div class="t" style="left:417px;top:771.1px;width:491px;height:1px;background:#eef0f3;border-radius:0px;"></div>
<div class="t" style="left:909px;top:771.1px;width:56px;height:1px;background:#eef0f3;border-radius:0px;"></div>
<div class="t" style="left:966px;top:771.1px;width:164.5px;height:1px;background:#eef0f3;border-radius:0px;"></div>
<div class="t" style="left:10.5px;top:803.1px;width:136.0px;height:1px;background:#eef0f3;border-radius:0px;"></div>
<div class="t" style="left:147.5px;top:803.1px;width:118.0px;height:1px;background:#eef0f3;border-radius:0px;"></div>
<div class="t" style="left:266.5px;top:803.1px;width:149.5px;height:1px;background:#eef0f3;border-radius:0px;"></div>
<div class="t" style="left:417px;top:803.1px;width:491px;height:1px;background:#eef0f3;border-radius:0px;"></div>
<div class="t" style="left:909px;top:803.1px;width:56px;height:1px;background:#eef0f3;border-radius:0px;"></div>
<div class="t" style="left:966px;top:803.1px;width:164.5px;height:1px;background:#eef0f3;border-radius:0px;"></div>
<div class="t" style="left:19.90px;top:685.60px;font-size:12px;line-height:14px;color:#878e9d;font-weight:normal;transform:scaleX(1.0052);">CC240362</div>
<div class="t" style="left:156.80px;top:685.60px;font-size:12px;line-height:14px;color:#878e9d;font-weight:normal;transform:scaleX(0.9077);">PR102</div>
<div class="t" style="left:276.10px;top:685.60px;font-size:12px;line-height:14px;color:#878e9d;font-weight:normal;transform:scaleX(0.8656);">FRAIS-DEP</div>
<div class="t" style="left:426.80px;top:685.60px;font-size:12px;line-height:14px;color:#878e9d;font-weight:normal;transform:scaleX(1.0589);">Frais de deplacement</div>
<div class="t" style="left:871.00px;top:685.60px;font-size:12px;line-height:14px;color:#878e9d;font-weight:normal;transform:scaleX(1.0189);">-3,00</div>
<div class="t" style="left:918.40px;top:685.60px;font-size:12px;line-height:14px;color:#878e9d;font-weight:normal;transform:scaleX(0.8000);">D</div>
<div class="t" style="left:1083.70px;top:685.60px;font-size:12px;line-height:14px;color:#878e9d;font-weight:normal;transform:scaleX(1.1149);">-183 €</div>
<div class="t" style="left:19.90px;top:716.60px;font-size:12px;line-height:14px;color:#878e9d;font-weight:normal;transform:scaleX(0.9861);">CC331451</div>
<div class="t" style="left:156.80px;top:716.60px;font-size:12px;line-height:14px;color:#878e9d;font-weight:normal;transform:scaleX(0.9493);">MT0003</div>
<div class="t" style="left:276.10px;top:716.60px;font-size:12px;line-height:14px;color:#878e9d;font-weight:normal;transform:scaleX(0.8599);">MT-EXTERNE</div>
<div class="t" style="left:426.80px;top:716.60px;font-size:12px;line-height:14px;color:#878e9d;font-weight:normal;transform:scaleX(1.0578);">Maintenance externe</div>
<div class="t" style="left:877.30px;top:716.60px;font-size:12px;line-height:14px;color:#878e9d;font-weight:normal;transform:scaleX(0.9248);">1,00</div>
<div class="t" style="left:918.40px;top:716.60px;font-size:12px;line-height:14px;color:#878e9d;font-weight:normal;transform:scaleX(0.7500);">P</div>
<div class="t" style="left:1096.40px;top:716.60px;font-size:12px;line-height:14px;color:#878e9d;font-weight:normal;transform:scaleX(1.0810);">87 €</div>
<div class="t" style="left:19.90px;top:748.60px;font-size:12px;line-height:14px;color:#878e9d;font-weight:normal;transform:scaleX(0.9861);">CC331451</div>
<div class="t" style="left:156.80px;top:748.60px;font-size:12px;line-height:14px;color:#878e9d;font-weight:normal;transform:scaleX(0.9493);">MT0025</div>
<div class="t" style="left:276.10px;top:748.60px;font-size:12px;line-height:14px;color:#878e9d;font-weight:normal;transform:scaleX(0.9799);">MT-ACQDOU</div>
<div class="t" style="left:426.80px;top:748.60px;font-size:12px;line-height:14px;color:#878e9d;font-weight:normal;transform:scaleX(1.0675);">Maintenance</div>
<div class="t" style="left:877.30px;top:748.60px;font-size:12px;line-height:14px;color:#878e9d;font-weight:normal;transform:scaleX(0.9248);">1,00</div>
<div class="t" style="left:918.40px;top:748.60px;font-size:12px;line-height:14px;color:#878e9d;font-weight:normal;transform:scaleX(0.9060);">UN</div>
<div class="t" style="left:1096.40px;top:748.60px;font-size:12px;line-height:14px;color:#878e9d;font-weight:normal;transform:scaleX(1.0810);">90 €</div>
<div class="t" style="left:19.90px;top:780.70px;font-size:12px;line-height:14px;color:#878e9d;font-weight:normal;transform:scaleX(0.9861);">CC331451</div>
<div class="t" style="left:156.80px;top:780.70px;font-size:12px;line-height:14px;color:#878e9d;font-weight:normal;transform:scaleX(0.9636);">UV0003</div>
<div class="t" style="left:276.10px;top:780.70px;font-size:12px;line-height:14px;color:#878e9d;font-weight:normal;transform:scaleX(1.0184);">UV-2</div>
<div class="t" style="left:426.80px;top:780.70px;font-size:12px;line-height:14px;color:#878e9d;font-weight:normal;transform:scaleX(1.0099);">Licence</div>
<div class="t" style="left:877.30px;top:780.70px;font-size:12px;line-height:14px;color:#878e9d;font-weight:normal;transform:scaleX(0.9248);">1,00</div>
<div class="t" style="left:918.40px;top:780.70px;font-size:12px;line-height:14px;color:#878e9d;font-weight:normal;transform:scaleX(0.7500);">P</div>
<div class="t" style="left:1089.70px;top:780.70px;font-size:12px;line-height:14px;color:#878e9d;font-weight:normal;transform:scaleX(1.0641);">580 €</div>
<div class="t" style="left:19.90px;top:811.80px;font-size:12px;line-height:14px;color:#878e9d;font-weight:normal;transform:scaleX(1.0209);">CC391195</div>
<div class="t" style="left:156.80px;top:811.80px;font-size:12px;line-height:14px;color:#878e9d;font-weight:normal;transform:scaleX(0.9077);">PR153</div>
<div class="t" style="left:276.10px;top:811.80px;font-size:12px;line-height:14px;color:#878e9d;font-weight:normal;transform:scaleX(0.8704);">PREST-BI</div>
<div class="t" style="left:426.80px;top:811.80px;font-size:12px;line-height:14px;color:#878e9d;font-weight:normal;transform:scaleX(1.0122);">Prestation BI</div>
<div class="t" style="left:877.00px;top:811.80px;font-size:12px;line-height:14px;color:#878e9d;font-weight:normal;transform:scaleX(0.9374);">0.50</div>
<div class="t" style="left:918.40px;top:811.80px;font-size:12px;line-height:14px;color:#878e9d;font-weight:normal;transform:scaleX(0.9000);">J</div>
<div class="t" style="left:1089.70px;top:811.80px;font-size:12px;line-height:14px;color:#878e9d;font-weight:normal;transform:scaleX(1.0641);">425 €</div>
<div class="t" style="left:1132px;top:645.4px;width:4px;height:177.2px;background:#eef0f3;border-radius:2px;"></div>
<div class="t" style="left:1132px;top:645.4px;width:4px;height:140.8px;background:#cfd4dc;border-radius:2px;"></div>
</body></html>
